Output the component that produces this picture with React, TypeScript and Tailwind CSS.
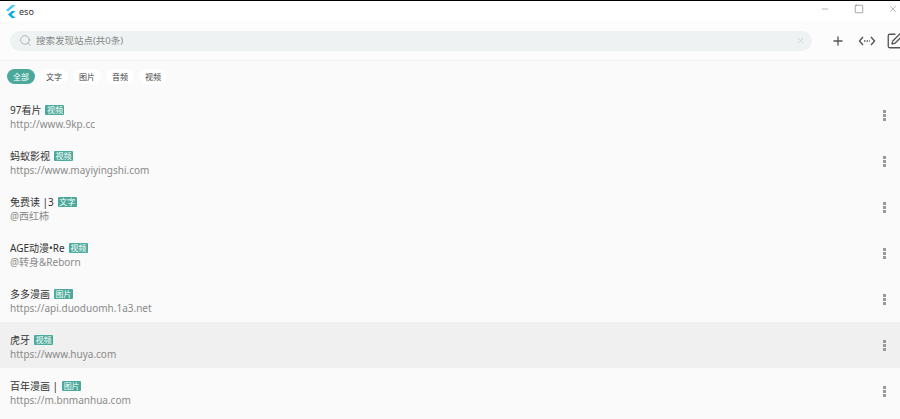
import { Plus, Search, X, Minus, Square, SquarePen } from 'lucide-react';

const filters = ['全部', '文字', '图片', '音频', '视频'];

const sites = [
  { name: '97看片', tag: '视频', sub: 'http://www.9kp.cc' },
  { name: '蚂蚁影视', tag: '视频', sub: 'https://www.mayiyingshi.com' },
  { name: '免费读 |3', tag: '文字', sub: '@西红柿' },
  { name: 'AGE动漫•Re', tag: '视频', sub: '@转身&Reborn' },
  { name: '多多漫画', tag: '图片', sub: 'https://api.duoduomh.1a3.net' },
  { name: '虎牙', tag: '视频', sub: 'https://www.huya.com', active: true },
  { name: '百年漫画 |', tag: '图片', sub: 'https://m.bnmanhua.com' },
];

const Row = ({ name, tag, sub, active }: { name: string; tag: string; sub: string; active?: boolean }) => (
  <div className={`flex h-[46px] items-center justify-between pl-[10px] pr-[14px] ${active ? 'bg-[#f0f0f0]' : ''}`}>
    <div className="flex flex-col pt-[4px]">
      <div className="flex h-[14px] items-center gap-[4px] text-[10px] leading-[14px] text-[#333]">
        <span>{name}</span>
        <span className="rounded-[1px] bg-[#4aa99b] px-[1.5px] text-[8px] leading-[10px] text-white">{tag}</span>
      </div>
      <div className="h-[14px] text-[10px] leading-[14px] text-[#8a8a8a]">{sub}</div>
    </div>
    <div className="flex flex-col gap-px">
      <span className="size-[3px] bg-[#999]" />
      <span className="size-[3px] bg-[#999]" />
      <span className="size-[3px] bg-[#999]" />
    </div>
  </div>
);

export default function App() {
  return (
    <div className="flex h-[419px] w-[900px] flex-col overflow-hidden bg-[#fafafa] font-['Noto_Sans','Noto_Sans_CJK_SC',sans-serif]">
      {/* title bar */}
      <div className="flex h-[21px] shrink-0 items-center justify-between border-t border-black bg-white pl-[5px] pr-[2px]">
        <div className="flex items-center gap-[3px]">
          <svg width="11" height="13" viewBox="0 0 11 13">
            <path d="M7 0 L10.5 0 L3 6.5 L1 5 Z" fill="#47c5fb" />
            <path d="M7 6 L10.5 6 L6.5 9.5 L10.5 13 L7 13 L3 9.5 Z" fill="#00a8e8" />
          </svg>
          <span className="text-[9px] leading-none text-[#333]">eso</span>
        </div>
        <div className="mb-[5px] flex items-center gap-[24px] text-[#555]">
          <Minus size={10} strokeWidth={1} />
          <Square size={10} strokeWidth={1.25} />
          <X size={10} strokeWidth={1} />
        </div>
      </div>

      {/* search bar */}
      <div className="flex h-[40px] shrink-0 items-center border-b border-[#f0f0f0] bg-[#fcfcfc] pl-[10px]">
        <div className="flex h-[20px] w-[802px] shrink-0 items-center rounded-full bg-[#eef2f2] pl-[9px] pr-[7px]">
          <Search size={13} strokeWidth={1.25} className="text-[#999]" />
          <span className="ml-[4px] flex-1 text-[9.5px] leading-none text-[#888]">搜索发现站点(共0条)</span>
          <X size={9} strokeWidth={2} className="text-[#ccc]" />
        </div>
        <div className="flex shrink-0 items-center text-[#555]">
          <Plus size={14} strokeWidth={2.25} className="ml-[19px]" />
          <svg width="18" height="18" viewBox="0 0 18 18" fill="none" stroke="currentColor" strokeWidth="1.4" className="ml-[13px]">
            <path d="M5 5 L1.5 9 L5 13" />
            <path d="M13 5 L16.5 9 L13 13" />
            <path d="M6 9 H12" strokeDasharray="1.4 1.2" />
          </svg>
          <SquarePen size={18} strokeWidth={1.75} className="ml-[10px] shrink-0" />
        </div>
      </div>

      {/* filters */}
      <div className="flex h-[31px] shrink-0 items-center gap-[5px] pl-[7px]">
        {filters.map((f, i) => (
          <span
            key={f}
            className={`flex h-[15px] w-[28px] items-center justify-center rounded-full text-[8px] leading-none ${i === 0 ? 'bg-[#4aa99b] text-white' : 'bg-white text-[#444]'}`}
          >
            {f}
          </span>
        ))}
      </div>

      {sites.map((s) => (
        <Row key={s.name} {...s} />
      ))}
    </div>
  );
}
